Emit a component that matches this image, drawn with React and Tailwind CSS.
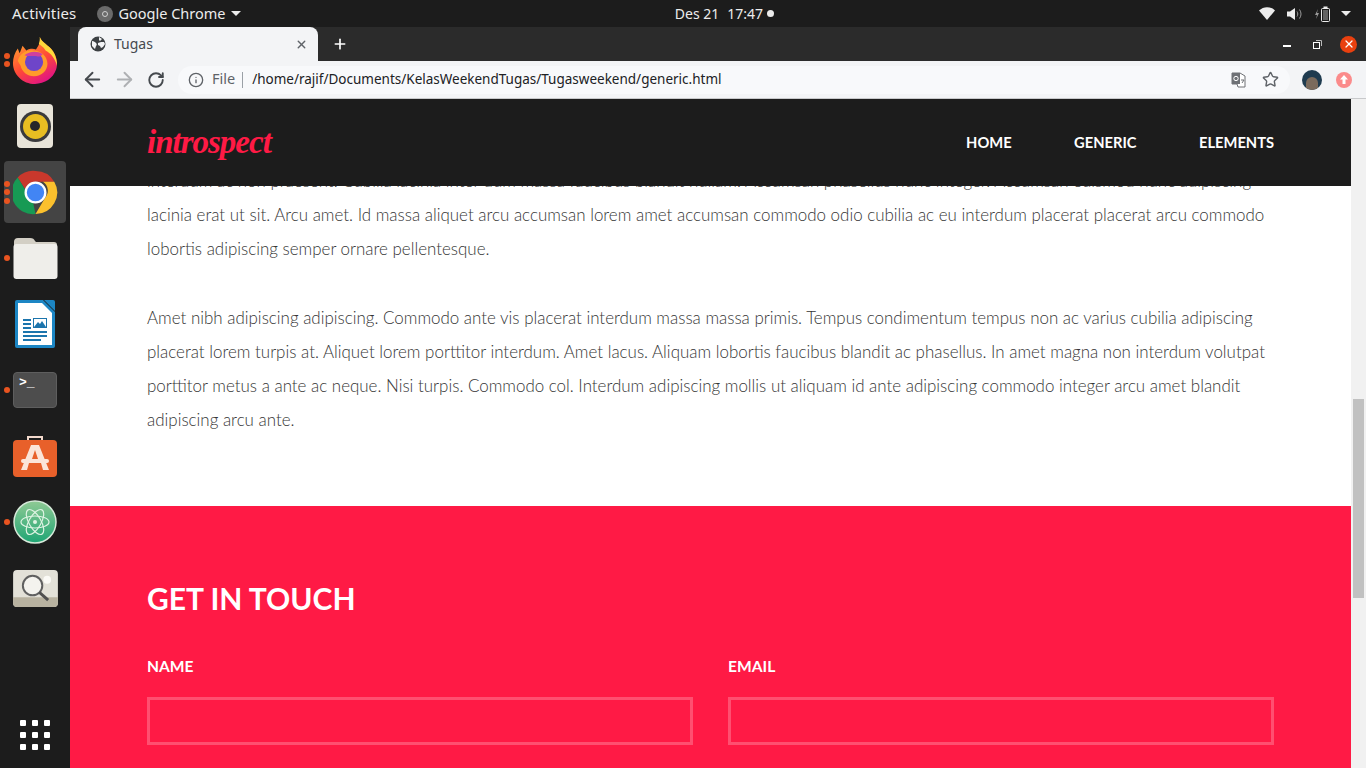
import { ArrowLeft, ArrowRight, RotateCw, Info, Star, Plus, X } from 'lucide-react';

const dotClass = 'w-[6px] h-[6px] rounded-full bg-[#e95420]';

const Firefox = () => (
  <svg width="46" height="47" viewBox="0 0 48 49">
    <defs>
      <linearGradient id="ff1" x1="0.1" y1="0.1" x2="0.6" y2="1">
        <stop offset="0" stopColor="#ffa02e" />
        <stop offset="0.55" stopColor="#ff4a36" />
        <stop offset="1" stopColor="#e3167f" />
      </linearGradient>
    </defs>
    <path d="M29 0c2 6 9 8 14 15 4 6 5 13 3 19-3 9-12 15-22 15C11 49 1 39 1 27c0-5 2-11 5-15l2 5 3-8 4 5c4-2 7-2 10-1 3-4 5-8 4-13z" fill="url(#ff1)" />
    <path d="M29 0c2 6 9 8 14 15 3 5 4 10 4 15-2-7-6-13-12-16-2-4-5-5-7-7 1-2 1-4 1-7z" fill="#ffd93b" />
    <path d="M6 25c2-8 10-12 16-11 8 0 15 6 15 14 0 7-6 13-14 13-7 0-13-5-14-11l-3-5z" fill="#ff9b2a" />
    <circle cx="23" cy="26" r="9.500" fill="#6e45c9" />
    <path d="M13 19c5-4 13-5 19-1-2 2-4 3-6 2-4-1-9 1-13-1z" fill="#d0409e" />
  </svg>
);

const Speaker = () => (
  <div className="w-9 h-[44px] rounded-[4px] bg-[#e8e4d9] flex items-center justify-center">
    <div className="w-[31px] h-[31px] rounded-full bg-[#3a3a3c] flex items-center justify-center">
      <div className="w-[25px] h-[25px] rounded-full bg-[#e8bd22] flex items-center justify-center">
        <div className="w-[10px] h-[10px] rounded-full bg-[#26262a]" />
      </div>
    </div>
  </div>
);

const ChromeLogo = () => (
  <svg width="45" height="45" viewBox="0 0 48 48">
    <path d="M24 1a23 23 0 0 1 20 11.500H24a11.500 11.500 0 0 0-11 8L5 8A23 23 0 0 1 24 1z" fill="#c9382c" />
    <path d="M5 8l8 13a11.500 11.500 0 0 0 8.500 14L24 47A23 23 0 0 1 5 8z" fill="#179a54" />
    <path d="M44 12.500A23 23 0 0 1 24 47l10-17a11.500 11.500 0 0 0-2-17.500z" fill="#fbc02d" />
    <circle cx="24" cy="24" r="10.500" fill="#4285f4" stroke="#fff" strokeWidth="2.500" />
  </svg>
);

const Folder = () => (
  <svg width="45" height="42" viewBox="0 0 45 42">
    <path d="M1 5a4 4 0 0 1 4-4h12c3 0 4 1 5 3l1 1h18a3 3 0 0 1 3 3v6H1z" fill="#d3cfc5" />
    <rect x="0.500" y="7" width="44" height="35" rx="3" fill="#efeeea" />
  </svg>
);

const Writer = () => (
  <svg width="40" height="48" viewBox="0 0 40 48">
    <path d="M2 0h26l12 12v34a2 2 0 0 1-2 2H2a2 2 0 0 1-2-2V2a2 2 0 0 1 2-2z" fill="#1c86c4" />
    <path d="M3 3h24l10 10v32H3z" fill="#fff" />
    <path d="M29 0h9a2 2 0 0 1 2 2v9z" fill="#1c86c4" />
    <path d="M8 19h8v2H8zM8 23h8v2H8zM8 27h8v2H8zM8 31h24v2H8zM8 35h24v2H8zM8 39h18v2H8z" fill="#1c75ad" />
    <rect x="18.500" y="18.500" width="13" height="9" fill="#fff" stroke="#1c75ad" />
    <path d="M19 27l4-5 2 2 2-3 4 6z" fill="#1c75ad" />
  </svg>
);

const Terminal = () => (
  <div className="w-11 h-9 rounded-[4px] bg-[#4d4d4d] border border-[#5e5e5e] text-white text-[13px] font-bold leading-none pl-[5px] pt-[3px] font-['Liberation_Mono',monospace]">
    &gt;_
  </div>
);

const Store = () => (
  <svg width="44" height="42" viewBox="0 0 44 42">
    <path d="M15 6V2h14v4" fill="none" stroke="#f2d9cc" strokeWidth="2" />
    <rect x="0" y="5" width="44" height="37" rx="4" fill="#e8602a" />
    <path d="M18 10h8l10 25h-6l-2-7H16l-2 7H8z" fill="#fbe4d8" />
    <path d="M22 15l-3 9h6z" fill="#e8602a" />
    <rect x="8" y="24" width="28" height="4" rx="2" fill="#fbe4d8" />
  </svg>
);

const Atom = () => (
  <svg width="44" height="44" viewBox="0 0 44 44">
    <defs>
      <linearGradient id="atomBg" x1="0" y1="0" x2="0" y2="1">
        <stop offset="0" stopColor="#8fca94" />
        <stop offset="1" stopColor="#1fa574" />
      </linearGradient>
    </defs>
    <circle cx="22" cy="22" r="21" fill="url(#atomBg)" stroke="#d5e8d8" strokeWidth="1.500" />
    <g fill="none" stroke="#dff3e3" strokeWidth="1.200">
      <ellipse cx="22" cy="22" rx="14" ry="6" />
      <ellipse cx="22" cy="22" rx="14" ry="6" transform="rotate(60 22 22)" />
      <ellipse cx="22" cy="22" rx="14" ry="6" transform="rotate(120 22 22)" />
    </g>
    <circle cx="22" cy="22" r="2" fill="#dff3e3" />
  </svg>
);

const Magnifier = () => (
  <svg width="45" height="37" viewBox="0 0 46 38">
    <rect x="0" y="0" width="46" height="38" rx="4" fill="#e3e1d8" />
    <path d="M0 28h46v6a4 4 0 0 1-4 4H4a4 4 0 0 1-4-4z" fill="#b8b2a0" />
    <circle cx="35" cy="10" r="4" fill="#fbfaf6" />
    <circle cx="20" cy="16" r="10" fill="#f4f3ee" stroke="#606060" strokeWidth="2" />
    <path d="M27 23l9 8" stroke="#505050" strokeWidth="3" />
  </svg>
);

const dockApps = [
  { icon: <Firefox />, dots: 2 },
  { icon: <Speaker />, dots: 0 },
  { icon: <ChromeLogo />, dots: 3, active: true },
  { icon: <Folder />, dots: 1 },
  { icon: <Writer />, dots: 0 },
  { icon: <Terminal />, dots: 1 },
  { icon: <Store />, dots: 0 },
  { icon: <Atom />, dots: 1 },
  { icon: <Magnifier />, dots: 0 },
];

const Dock = () => (
  <aside className="w-[70px] shrink-0 bg-[#1c1c1c] flex flex-col pb-[18px]">
    {dockApps.map((app, i) => (
      <div key={i} className="relative flex items-center justify-center h-[66px]">
        {app.active && <div className="absolute left-[4px] right-[4px] top-[2px] bottom-[2px] rounded-[4px] bg-[#444444]" />}
        <div className="relative flex">{app.icon}</div>
        {app.dots > 0 && (
          <div className="absolute left-[4px] top-0 bottom-0 flex flex-col justify-center gap-[2.500px]">
            {Array.from({ length: app.dots }).map((_, d) => (
              <span key={d} className={dotClass} />
            ))}
          </div>
        )}
      </div>
    ))}
    <div className="mt-auto mx-auto grid grid-cols-3 gap-[6px]">
      {Array.from({ length: 9 }).map((_, i) => (
        <span key={i} className="w-[6px] h-[6px] rounded-[1px] bg-white" />
      ))}
    </div>
  </aside>
);

const TopBar = () => (
  <header className="h-[27px] shrink-0 bg-[#1c1c1c] text-[#ececec] text-[14.500px] flex items-center justify-between pl-[12px] pr-[15px] font-['Noto_Sans',sans-serif]">
    <div className="flex items-center w-[486px]">
      <span className="text-[15px] tracking-[0.2px]">Activities</span>
      <span className="ml-[20px] w-[16px] h-[16px] rounded-full bg-[#6a6a6a] flex items-center justify-center">
        <span className="w-[6px] h-[6px] rounded-full border border-[#d0d0d0]" />
      </span>
      <span className="ml-[6px]">Google Chrome</span>
      <span className="ml-[5px] w-0 h-0 border-x-[5px] border-x-transparent border-t-[5px] border-t-[#ececec]" />
    </div>
    <div className="flex items-center gap-[8px] text-[14px]">
      <span>Des 21</span>
      <span>17:47</span>
      <span className="-ml-[4px] w-[7px] h-[7px] rounded-full bg-[#ececec]" />
    </div>
    <div className="flex items-center justify-end w-[400px]">
      <svg width="16" height="13" viewBox="0 0 16 13"><path d="M0 3.500C4.500-1 11.500-1 16 3.500L8 13z" fill="#ececec" /></svg>
      <svg width="16" height="14" viewBox="0 0 16 14" fill="none" className="ml-[12px]"><path d="M0 4.500h3L8 1v12L3 9.500H0z" fill="#ececec" /><path d="M10 4.500c1 1.500 1 3.500 0 5M12.500 2.500c2 3 2 6 0 9" stroke="#9a9a9a" /></svg>
      <svg width="16" height="16" viewBox="0 0 16 16" fill="none" className="ml-[12px]"><path d="M3 3L0 9h2l-1 4 3-6H2z" fill="#9a9a9a" /><rect x="6.500" y="2.500" width="8" height="13" rx="1" stroke="#ececec" /><rect x="8" y="4" width="5" height="10" fill="#ececec" fillOpacity="0.35" /><rect x="8.500" y="0.500" width="4" height="2" fill="#ececec" /></svg>
      <span className="ml-[10px] w-0 h-0 border-x-[5px] border-x-transparent border-t-[5px] border-t-[#ececec]" />
    </div>
  </header>
);

const BrowserChrome = () => (
  <div className="shrink-0 font-['Noto_Sans',sans-serif]">
    <div className="h-[34px] bg-[#2b2b2b] flex items-center pl-[8px]">
      <div className="w-[240px] h-[34px] bg-[#f3f4f6] rounded-t-[8px] flex items-center pl-[12px] pr-[10px] text-[#45494e] text-[14px]">
        <svg width="16" height="16" viewBox="0 0 16 16" className="shrink-0">
          <circle cx="8" cy="8" r="7.500" fill="#3c4043" />
          <path d="M2 5c2 0 3 1 4 2s1 2 0 3l-1 3-3-3zM9 1l3 2-2 2 1 1h3l1 2-2 3-2 1-1-2-2-1 0-2 3-1-2-2z" fill="#f3f4f6" />
        </svg>
        <span className="ml-[8px] flex-1 pb-[2px]">Tugas</span>
        <X size={13} strokeWidth={2.500} className="text-[#5f6368]" />
      </div>
      <Plus size={16} strokeWidth={2.500} className="ml-[14px] text-white" />
      <div className="ml-auto flex items-center h-full pr-[9px] text-white">
        <span className="mt-[4px] w-[8px] h-[1.500px] bg-white" />
        <svg width="9" height="9" viewBox="0 0 9 9" fill="none" className="ml-[22px]"><rect x="0.500" y="2.500" width="6" height="6" stroke="#fff" /><path d="M3 0.500h5.500V6" stroke="#bbb" /></svg>
        <span className="ml-[18px] w-[17px] h-[17px] rounded-full bg-[#e9400f] flex items-center justify-center">
          <X size={12} strokeWidth={2.500} />
        </span>
      </div>
    </div>
    <div className="h-[37px] box-content bg-[#f3f4f6] border-b border-[#c8c9cb] flex items-center pl-[6px]">
      <span className="w-[32px] flex justify-center"><ArrowLeft size={23} strokeWidth={2} className="text-[#45494e]" /></span>
      <span className="w-[32px] flex justify-center"><ArrowRight size={23} strokeWidth={2} className="text-[#aeb0b3]" /></span>
      <span className="w-[32px] flex justify-center"><RotateCw size={18} strokeWidth={2.500} className="text-[#45494e]" /></span>
      <div className="ml-[6px] w-[1112px] h-[28px] rounded-full bg-[#f8f9fb] flex items-center pl-[10px] pr-[10px]">
        <Info size={16} strokeWidth={2} className="text-[#5f6368]" />
        <span className="ml-[8px] pb-[2px] text-[14.500px] text-[#5f6368]">File</span>
        <span className="ml-[7px] w-px h-[16px] bg-[#9aa0a6]" />
        <span className="ml-[9px] text-[13.500px] text-[#202124]">/home/rajif/Documents/KelasWeekendTugas/Tugasweekend/generic.html</span>
        <span className="ml-auto pr-[1px] flex items-center gap-[15px]">
          <svg width="16" height="16" viewBox="0 0 16 16"><path d="M1 1h8l5 3v11H7l-1-3H1z" fill="#fff" stroke="#6e7175" /><rect x="1" y="1" width="8" height="11" fill="#6e7175" /><circle cx="5" cy="6.500" r="2.200" fill="none" stroke="#fff" /><path d="M10 8h3M11 11l2-3" stroke="#6e7175" /></svg>
          <Star size={17} strokeWidth={2} className="text-[#5f6368]" />
        </span>
      </div>
      <span className="ml-[12px] w-5 h-5 rounded-full bg-[#1f3b4f] flex items-end justify-center overflow-hidden">
        <span className="w-[12px] h-[13px] rounded-t-full bg-[#7a6a5c]" />
      </span>
      <span className="ml-[14px] w-4 h-4 rounded-full bg-[#fb8b8b] flex items-center justify-center">
        <svg width="8" height="9" viewBox="0 0 8 9"><path d="M4 0l4 4.500H5.500V9h-3V4.500H0z" fill="#fff" /></svg>
      </span>
    </div>
  </div>
);

const SiteHeader = () => (
  <div className="absolute top-0 left-0 right-[15px] h-[87px] bg-[#1c1c1c] flex items-center justify-between pl-[77px] pr-[77px] text-white">
    <span className="text-[#ff1a45] text-[33px] font-bold italic tracking-[-1px] font-['Liberation_Serif',cursive]">introspect</span>
    <nav className="flex gap-[62.500px] text-[14.700px] font-bold font-['Lato',sans-serif]">
      <span>HOME</span>
      <span>GENERIC</span>
      <span>ELEMENTS</span>
    </nav>
  </div>
);

const Field = ({ label }) => (
  <div className="flex-1">
    <div className="text-[15.600px] font-bold text-white leading-[20px]">{label}</div>
    <div className="mt-[21px] h-[48px] border-[3px] border-[#ff4f70]" />
  </div>
);

const Page = () => (
  <main className="relative flex-1 overflow-hidden bg-white font-['Lato',sans-serif]">
    <div className="absolute top-0 right-0 bottom-0 w-[15px] bg-[#f1f1f1]">
      <div className="mt-[300px] mx-auto w-[11px] h-[199px] bg-[#c1c1c1]" />
    </div>
    <div className="mr-[15px]">
      <div className="pt-[65px] pb-[69px] pl-[77px] pr-[77px] text-[16.950px] font-light leading-[34px] text-[#363636]">
        <p>
          interdum ac non praesent. Cubilia lacinia inter dum massa faucibus blandit nullam. Accumsan phasellus nunc integer. Accumsan euismod nunc adipiscing
          lacinia erat ut sit. Arcu amet. Id massa aliquet arcu accumsan lorem amet accumsan commodo odio cubilia ac eu interdum placerat placerat arcu commodo
          lobortis adipiscing semper ornare pellentesque.
        </p>
        <p className="mt-[35px]">
          Amet nibh adipiscing adipiscing. Commodo ante vis placerat interdum massa massa primis. Tempus condimentum tempus non ac varius cubilia adipiscing
          placerat lorem turpis at. Aliquet lorem porttitor interdum. Amet lacus. Aliquam lobortis faucibus blandit ac phasellus. In amet magna non interdum volutpat
          porttitor metus a ante ac neque. Nisi turpis. Commodo col. Interdum adipiscing mollis ut aliquam id ante adipiscing commodo integer arcu amet blandit
          adipiscing arcu ante.
        </p>
      </div>
      <section className="bg-[#ff1a45] pt-[72px] pl-[77px] pr-[77px] pb-[40px]">
        <h2 className="text-[30px] font-bold leading-[40px] text-white">GET IN TOUCH</h2>
        <div className="mt-[38px] flex gap-[35px]">
          <Field label="NAME" />
          <Field label="EMAIL" />
        </div>
      </section>
    </div>
    <SiteHeader />
  </main>
);

export default function App() {
  return (
    <div className="w-[1366px] h-[768px] overflow-hidden flex flex-col">
      <TopBar />
      <div className="flex-1 min-h-0 flex">
        <Dock />
        <div className="flex-1 min-w-0 flex flex-col">
          <BrowserChrome />
          <Page />
        </div>
      </div>
    </div>
  );
}
